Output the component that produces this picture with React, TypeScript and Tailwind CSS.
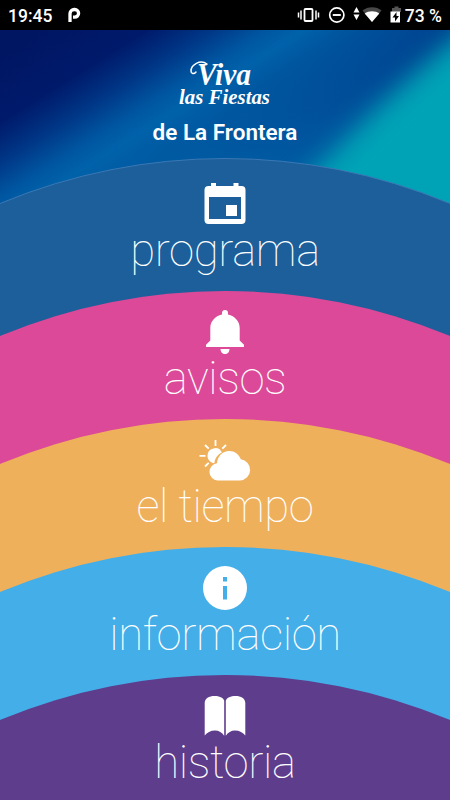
import React from 'react';

const CalendarIcon = () => (
    <svg width="42" height="42" viewBox="0 0 42 42" className="absolute left-[204px] top-[25px]" fill="currentColor">
        <path fillRule="evenodd" d="M7 0h5v3h17.500V0h5v3h3a4 4 0 0 1 4 4v30a4 4 0 0 1-4 4h-33a4 4 0 0 1-4-4V7a4 4 0 0 1 4-4H7zM5 14v22h32V14z" />
        <path d="M22 22h11v11H22z" />
    </svg>
);

const BellIcon = () => (
    <svg width="40" height="46" viewBox="0 0 40 46" className="absolute left-[205px] top-[18px]" fill="currentColor">
        <path d="M20 1a3 3 0 0 1 3 3v1.500c7 1.500 11.700 7 11.700 13.500v12.500l4.300 4.200V38H1v-2.300l4.300-4.200V19C5.300 12.500 10 7 17 5.500V4a3 3 0 0 1 3-3z" />
        <path d="M15.500 40h9c0 3-2 5-4.500 5s-4.500-2-4.500-5z" />
    </svg>
);

const WeatherIcon = () => (
    <svg width="52" height="42" viewBox="0 0 52 42" className="absolute left-[199px] top-[20px]" fill="currentColor">
        <path d="M16.500 1v6M6 6l3.700 3.700M27 6l-3.700 3.700M0.500 16.800h6M6 27.500l3.700-3.700" stroke="currentColor" strokeWidth="1.800" />
        <path d="M15.400 24.300c-3.900-.3-6.900-3.600-6.900-7.500a7.600 7.600 0 0 1 14.400-3.400c-4.200 1.900-7.100 5.800-7.500 10.900z" />
        <path d="M18.500 41.500a8.700 8.700 0 0 1-.5-17.300c.5-6.700 5.500-12.200 12.200-12.200 5.400 0 9.800 3.400 11.600 8.200A10.700 10.700 0 0 1 41 41.500z" />
    </svg>
);

const InfoIcon = () => (
    <svg width="44" height="44" viewBox="0 0 44 44" className="absolute left-[203px] top-[19px]" fill="currentColor">
        <path fillRule="evenodd" d="M22 0a22 22 0 1 1 0 44 22 22 0 0 1 0-44zM20 11v4.500h4V11zM20 20v13.500h4V20z" />
    </svg>
);

const BookIcon = () => (
    <svg width="42" height="42" viewBox="0 0 42 42" className="absolute left-[204px] top-[20px]" fill="currentColor">
        <path d="M0.700 8C0.700 3.500 5 1 10.500 1c5 0 8.500 1.500 9.700 4.500v35.300C18 37.500 15 35.500 11 35.500c-4.500 0-8 2-10.300 5z" />
        <path d="M41.300 8c0-4.500-4.300-7-9.800-7-5 0-8.500 1.500-9.700 4.500v35.300c2.200-3.300 5.200-5.300 9.200-5.300 4.500 0 8 2 10.300 5z" />
    </svg>
);

const sections = [
    { label: 'programa', icon: CalendarIcon, box: 'h-[133px]', fill: 'bg-[#1c5f9b] border border-[#3a78b4]', text: 'pt-[65px]' },
    { label: 'avisos', icon: BellIcon, box: 'h-[128px]', fill: 'bg-[#dc4998]', text: 'pt-[60px]' },
    { label: 'el tiempo', icon: WeatherIcon, box: 'h-[128px]', fill: 'bg-[#efb05c]', text: 'pt-[60px]' },
    { label: 'información', icon: InfoIcon, box: 'h-[128px]', fill: 'bg-[#44aee8]', text: 'pt-[60px]' },
    { label: 'historia', icon: BookIcon, box: 'h-[125px]', fill: 'bg-[#5e3d8c]', text: 'pt-[60px]' }
];

function StatusBar() {
    return (
        <div className="relative z-10 h-[30px] bg-black flex items-center justify-between pl-2 pr-2 text-white text-[17.5px] font-medium">
            <div className="flex items-center gap-4">
                <span className="pt-px leading-[30px]">19:45</span>
                <svg width="13" height="16" viewBox="0 0 13 16" fill="none">
                    <path d="M2 15V6.500A4.200 4.200 0 0 1 6.200 2.500h.6a3.800 3.800 0 0 1 0 7.600H5" stroke="white" strokeWidth="3.300" />
                </svg>
            </div>
            <div className="flex items-center">
                <svg width="108" height="22" viewBox="0 0 108 22" fill="none" stroke="white">
                    <rect x="7.500" y="5" width="8" height="12" rx="1" strokeWidth="1.800" />
                    <path d="M4 6.500v9M1.500 8.500v5M19 6.500v9M21.500 8.500v5" strokeWidth="1.500" />
                    <circle cx="39.800" cy="11" r="7.100" strokeWidth="1.700" />
                    <path d="M35.800 11h8" strokeWidth="1.900" />
                    <path d="M59.500 3l3 5.500h-6zM62.500 10.500l-3 5.500-3-5.500z" fill="white" stroke="none" />
                    <path d="M65.500 6.500C70.500 2 80 2 84.500 6.500L75 18z" fill="#484848" stroke="none" />
                    <path d="M67.700 9.500c4-3 10.800-3 14.600 0L75 18z" fill="white" stroke="none" />
                    <path d="M95 4h2.500V2.500h4V4h2.500v4h-9z" fill="#555" stroke="none" />
                    <path d="M93.500 7.500h9.500v11h-9.500z" fill="white" stroke="none" />
                    <path d="M99.500 8L95.500 13.500h2.500v4l4-5.500h-2.500z" fill="black" stroke="none" />
                </svg>
                <span className="pt-px leading-[30px]">73 %</span>
            </div>
        </div>
    );
}

function Backdrop() {
    return (
        <svg width="450" height="190" viewBox="0 0 450 190" className="absolute left-0 top-0">
            <defs>
                <linearGradient id="base" x1="0" y1="0" x2="0" y2="1">
                    <stop offset="0" stopColor="#00418f" />
                    <stop offset="0.7" stopColor="#005aa2" />
                    <stop offset="1" stopColor="#005ba2" />
                </linearGradient>
                {/* the streak fades out towards the middle of the header, the navy falls off into it */}
                <linearGradient id="sweep" gradientUnits="userSpaceOnUse" x1="40" y1="0" x2="178" y2="220">
                    <stop offset="0" stopColor="#001663" />
                    <stop offset="0.22" stopColor="#001a6b" />
                    <stop offset="0.34" stopColor="#003484" />
                    <stop offset="0.46" stopColor="#0055a0" />
                    <stop offset="0.54" stopColor="#0062aa" />
                    <stop offset="0.66" stopColor="#005ba3" stopOpacity="0.6" />
                    <stop offset="0.85" stopColor="#005aa2" stopOpacity="0" />
                </linearGradient>
                <filter id="edge" x="-50%" y="-50%" width="200%" height="200%" colorInterpolationFilters="sRGB">
                    <feGaussianBlur stdDeviation="13" />
                </filter>
            </defs>
            <rect width="450" height="190" fill="url(#base)" />
            <rect width="450" height="190" fill="url(#sweep)" />
            <path d="M500-30L430 30 375 80 310 145 240 230H540V-30z" fill="#00a3b6" filter="url(#edge)" />
        </svg>
    );
}

function Header() {
    return (
        <header className="relative h-[128px] text-white">
            <Backdrop />
            <div className="relative flex flex-col items-center pt-[24px]">
                <svg width="104" height="60" viewBox="-3 -6 104 60" fill="white" className="overflow-visible font-['Liberation_Serif',serif] italic">
                    <path d="M31 4C24-1 15 5 15 11c0 3 3 3.500 5 1" fill="none" stroke="white" strokeWidth="1.500" strokeLinecap="round" />
                    <text x="21" y="24.500" fontSize="31" fontWeight="700" textLength="54" lengthAdjust="spacingAndGlyphs">Viva</text>
                    <text x="3" y="44" fontSize="21" fontWeight="700" textLength="91" lengthAdjust="spacingAndGlyphs">las Fiestas</text>
                </svg>
                <h1 className="mt-[5px] text-[22.5px] leading-[26px] font-semibold">de La Frontera</h1>
            </div>
        </header>
    );
}

export default function App() {
    return (
        <div className="relative w-[450px] h-[800px] overflow-hidden bg-black font-['Roboto',sans-serif]">
            <StatusBar />
            <Header />
            <main>
                {sections.map((section) => (
                    <section key={section.label} className={`relative ${section.box}`}>
                        <div className={`absolute top-0 left-1/2 -translate-x-1/2 size-[1170px] rounded-full ${section.fill}`} />
                        <div className={`relative text-center text-white ${section.text}`}>
                            <h2 className="text-[45.5px] leading-[56px] tracking-[-0.4px] font-thin">{section.label}</h2>
                        </div>
                        <div className="text-white">
                            <section.icon />
                        </div>
                    </section>
                ))}
            </main>
        </div>
    );
}
